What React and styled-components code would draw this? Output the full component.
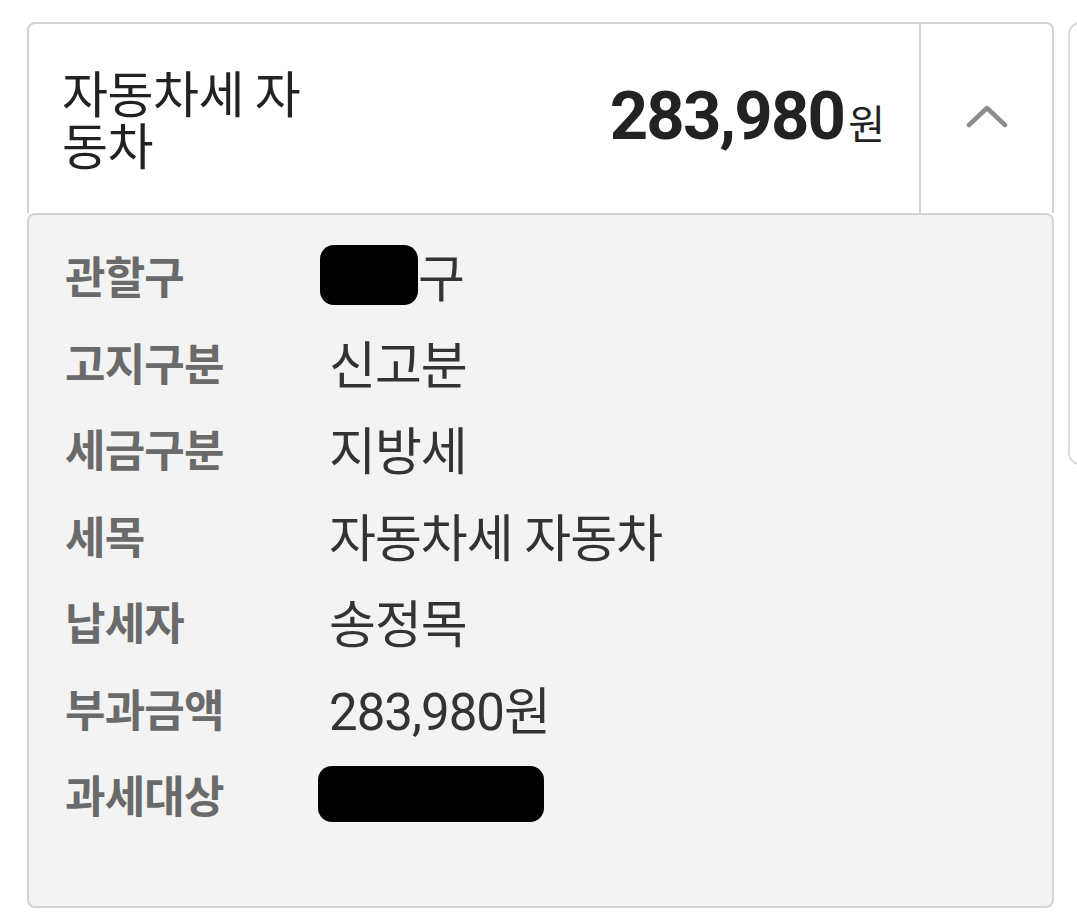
import React from 'react';
import styled, { createGlobalStyle } from 'styled-components';

const GlobalStyle = createGlobalStyle`
  html, body {
    margin: 0;
    background: #fff;
    overflow: hidden;
  }
  body {
    font-family: "Noto Sans CJK KR", "Noto Sans", sans-serif;
    color: #222;
  }
`;

const Page = styled.div`
  display: flex;
  align-items: flex-start;
  gap: 14px;
  padding: 22px 0 0 27px;
  width: 1400px;
`;

const Card = styled.div`
  flex-shrink: 0;
  width: 1027px;
  display: flex;
  flex-direction: column;
`;

const Header = styled.div`
  display: flex;
  height: 189px;
  background: #fff;
  border: 2px solid #d3d3d3;
  border-bottom: none;
  border-radius: 8px 8px 0 0;
`;

const Summary = styled.div`
  flex: 1;
  display: flex;
  align-items: center;
  justify-content: space-between;
  padding: 0 34px 0 33px;
`;

const Title = styled.div`
  width: 270px;
  font-size: 50px;
  line-height: 52px;
  color: #222;
  letter-spacing: -0.5px;
  margin-top: -4px;
`;

const Amount = styled.div`
  display: flex;
  align-items: baseline;
  color: #222;
  margin-top: -6px;
`;

const Number = styled.span`
  font-family: Roboto, "Noto Sans CJK KR", sans-serif;
  font-weight: 700;
  font-size: 67px;
  letter-spacing: -1.8px;
`;

const Unit = styled.span`
  font-size: 40px;
  margin-left: 4px;
`;

const Toggle = styled.div`
  width: 131px;
  border-left: 2px solid #d3d3d3;
  display: flex;
  align-items: center;
  justify-content: center;
  padding-bottom: 4px;
`;

const Panel = styled.div`
  box-sizing: content-box;
  height: 674px;
  background: #f3f3f3;
  border: 2px solid #d3d3d3;
  border-radius: 8px;
  padding: 17px 0 0 36px;
  display: flex;
  flex-direction: column;
`;

const Row = styled.div`
  display: grid;
  grid-template-columns: 264px 1fr;
  align-items: center;
  height: 86.5px;
`;

const Label = styled.div`
  font-size: 44px;
  font-weight: 700;
  color: #6a6a6a;
  letter-spacing: -0.8px;
`;

const Value = styled.div`
  display: flex;
  align-items: center;
  font-family: Roboto, "Noto Sans CJK KR", sans-serif;
  font-size: 51px;
  color: #333;
  letter-spacing: -1px;
`;

const Redacted = styled.span`
  display: inline-block;
  background: #000;
  border-radius: 14px;
  width: ${(p) => p.$w}px;
  height: ${(p) => p.$h}px;
  margin-left: ${(p) => p.$offset}px;
`;

const SideCard = styled.div`
  flex-shrink: 0;
  width: 300px;
  height: 439px;
  border: 2px solid #dcdcdc;
  border-radius: 12px;
  background: #fff;
`;

function ChevronUp() {
  return (
    <svg width="42" height="24" viewBox="0 0 42 24" fill="none">
      <path d="M3 20 L21 3 L39 20" stroke="#8c8c8c" strokeWidth="4.5" strokeLinecap="round" strokeLinejoin="round" />
    </svg>
  );
}

const rows = [
  { label: '관할구', value: <><Redacted $w={98} $h={60} $offset={-9} />구</> },
  { label: '고지구분', value: '신고분' },
  { label: '세금구분', value: '지방세' },
  { label: '세목', value: '자동차세 자동차' },
  { label: '납세자', value: '송정목' },
  { label: '부과금액', value: '283,980원' },
  { label: '과세대상', value: <Redacted $w={226} $h={56} $offset={-11} /> },
];

export default function App() {
  return (
    <>
      <GlobalStyle />
      <Page>
        <Card>
          <Header>
            <Summary>
              <Title>자동차세 자동차</Title>
              <Amount>
                <Number>283,980</Number>
                <Unit>원</Unit>
              </Amount>
            </Summary>
            <Toggle>
              <ChevronUp />
            </Toggle>
          </Header>
          <Panel>
            {rows.map((r) => (
              <Row key={r.label}>
                <Label>{r.label}</Label>
                <Value>{r.value}</Value>
              </Row>
            ))}
          </Panel>
        </Card>
        <SideCard />
      </Page>
    </>
  );
}
